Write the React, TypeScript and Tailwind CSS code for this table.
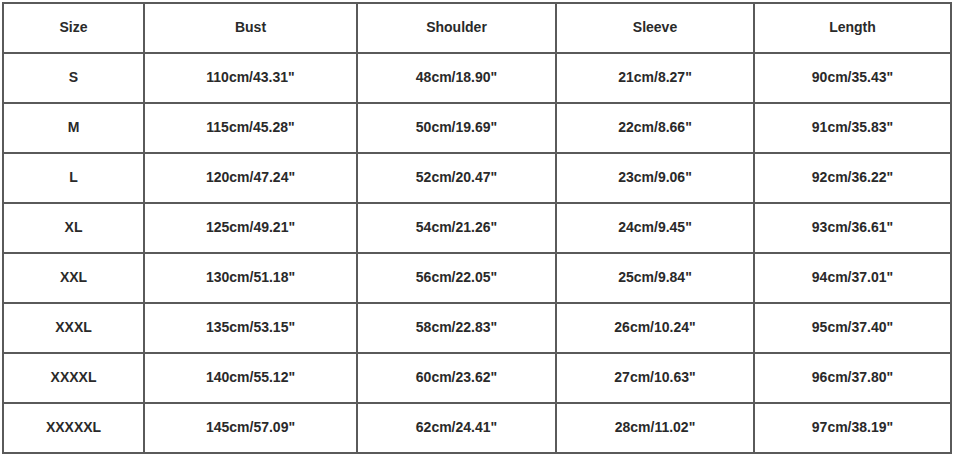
const headers = ["Size", "Bust", "Shoulder", "Sleeve", "Length"];

const rows = [
  ["S", "110cm/43.31\"", "48cm/18.90\"", "21cm/8.27\"", "90cm/35.43\""],
  ["M", "115cm/45.28\"", "50cm/19.69\"", "22cm/8.66\"", "91cm/35.83\""],
  ["L", "120cm/47.24\"", "52cm/20.47\"", "23cm/9.06\"", "92cm/36.22\""],
  ["XL", "125cm/49.21\"", "54cm/21.26\"", "24cm/9.45\"", "93cm/36.61\""],
  ["XXL", "130cm/51.18\"", "56cm/22.05\"", "25cm/9.84\"", "94cm/37.01\""],
  ["XXXL", "135cm/53.15\"", "58cm/22.83\"", "26cm/10.24\"", "95cm/37.40\""],
  ["XXXXL", "140cm/55.12\"", "60cm/23.62\"", "27cm/10.63\"", "96cm/37.80\""],
  ["XXXXXL", "145cm/57.09\"", "62cm/24.41\"", "28cm/11.02\"", "97cm/38.19\""],
];

export default function App() {
  const all = [headers, ...rows];
  return (
    <div className="w-[954px] h-[456px] bg-white pl-[2px] pt-[2px]" style={{ fontFamily: '"Liberation Sans", Arial, sans-serif' }}>
      <div className="grid w-[950px] grid-cols-[139px_211px_197px_196px_195px] auto-rows-[48px] gap-[2px] bg-[#5a5a5a] p-[2px]">
        {all.map((row, i) =>
          row.map((cell, j) => (
            <div
              key={`${i}-${j}`}
              className="flex items-center justify-center bg-white pb-[2px] text-[14px] font-bold text-[#2a2a2a]"
            >
              {cell}
            </div>
          ))
        )}
      </div>
    </div>
  );
}
